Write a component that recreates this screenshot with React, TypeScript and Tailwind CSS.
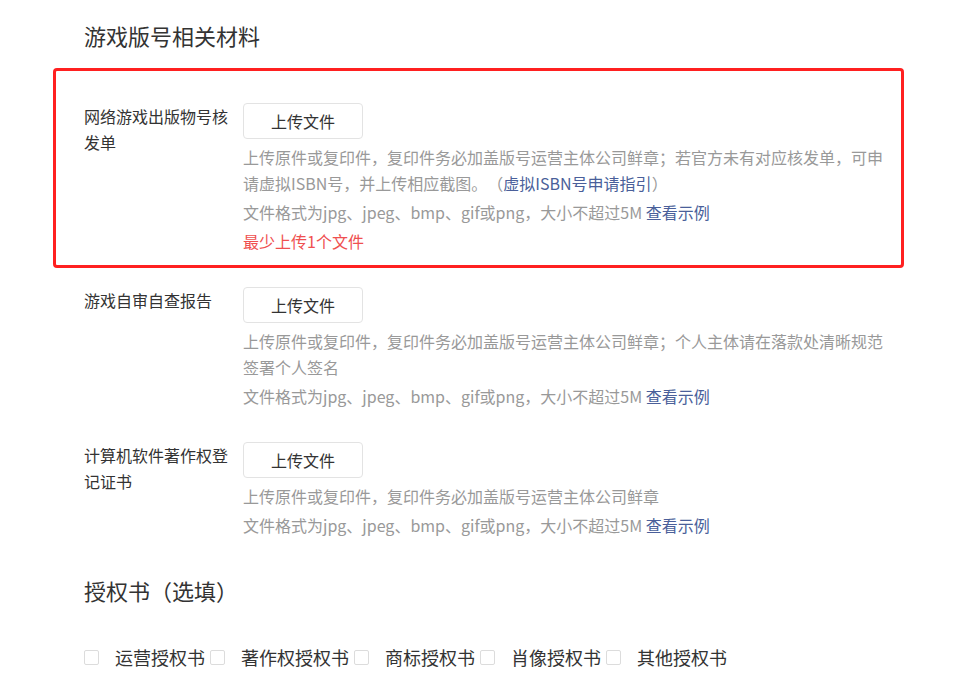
import React from "react";

const font = { fontFamily: '"Noto Sans CJK SC", "Noto Sans", sans-serif' };

function Link({ children }: { children: React.ReactNode }) {
  return <span className="text-[#4a5f9a]">{children}</span>;
}

function Row({
  label,
  lines,
  error,
}: {
  label: string;
  lines: React.ReactNode[];
  error?: string;
}) {
  return (
    <div className="flex items-start">
      <div className="w-[159px] shrink-0 pr-[9px] text-[16px] leading-[26px] text-[#333]">
        {label}
      </div>
      <div className="flex flex-col">
        <button className="h-[36px] w-[120px] rounded-[4px] border border-[#e3e3e3] bg-white text-[16px] text-[#333]">
          上传文件
        </button>
        <div className="mt-[5px] w-[648px] text-[16px] leading-[26px] text-[#999] [text-spacing-trim:space-all]">
          {lines.map((l, i) => (
            <p key={i} className={i === 0 ? "" : "mt-[3px]"}>
              {l}
            </p>
          ))}
          {error && <p className="mt-[3px] text-[#ef5050]">{error}</p>}
        </div>
      </div>
    </div>
  );
}

function Check({ label }: { label: string }) {
  return (
    <div className="mr-[5px] flex items-center">
      <span className="h-[15px] w-[15px] rounded-[2px] border border-[#dcdcdc] bg-white" />
      <span className="ml-[16px] text-[18px] leading-[26px] text-[#333]">{label}</span>
    </div>
  );
}

export default function App() {
  const fmt = (
    <>
      文件格式为jpg、jpeg、bmp、gif或png，大小不超过5M <Link>查看示例</Link>
    </>
  );
  return (
    <div className="h-[697px] w-[958px] overflow-hidden bg-white" style={font}>
      <h2 className="ml-[84px] pt-[20px] text-[22px] font-normal leading-[30px] text-[#333]">
        游戏版号相关材料
      </h2>

      <div className="ml-[53px] mt-[18px] w-[851px] rounded-[4px] border-[3px] border-[#ff2020] pb-[11px] pl-[28px] pt-[32px]">
        <Row
          label="网络游戏出版物号核发单"
          lines={[
            <>
              上传原件或复印件，复印件务必加盖版号运营主体公司鲜章；若官方未有对应核发单，可申请虚拟ISBN号，并上传相应截图。（
              <Link>虚拟ISBN号申请指引</Link>）
            </>,
            fmt,
          ]}
          error="最少上传1个文件"
        />
      </div>

      <div className="ml-[84px] mt-[19px]">
        <Row
          label="游戏自审自查报告"
          lines={[
            "上传原件或复印件，复印件务必加盖版号运营主体公司鲜章；个人主体请在落款处清晰规范签署个人签名",
            fmt,
          ]}
        />
      </div>

      <div className="ml-[84px] mt-[33px]">
        <Row
          label="计算机软件著作权登记证书"
          lines={["上传原件或复印件，复印件务必加盖版号运营主体公司鲜章", fmt]}
        />
      </div>

      <h2 className="ml-[84px] mt-[37px] text-[22px] font-normal leading-[30px] text-[#333]">
        授权书（选填）
      </h2>

      <div className="ml-[84px] mt-[39px] flex items-center">
        <Check label="运营授权书" />
        <Check label="著作权授权书" />
        <Check label="商标授权书" />
        <Check label="肖像授权书" />
        <Check label="其他授权书" />
      </div>
    </div>
  );
}
